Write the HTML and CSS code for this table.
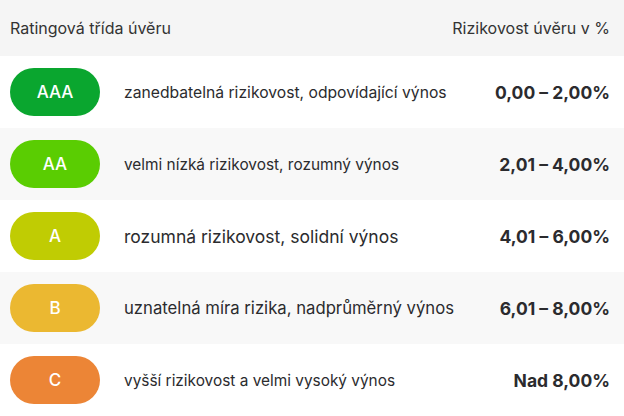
FILE: index.html
```html
<!DOCTYPE html>
<html>
<head>
    <title>Ratingové třídy</title>
    <link rel="stylesheet" href="styles.css">
</head>
<body>
    <div class="rating-table">
        <div class="rating-head">
            <span>Ratingová třída úvěru</span>
            <span>Rizikovost úvěru v %</span>
        </div>

        <div class="rating-row">
            <span class="badge badge-aaa">AAA</span>
            <span class="desc">zanedbatelná rizikovost, odpovídající výnos</span>
            <span class="range">0,00 – 2,00%</span>
        </div>
        <div class="rating-row alt">
            <span class="badge badge-aa">AA</span>
            <span class="desc desc-sm">velmi nízká rizikovost, rozumný výnos</span>
            <span class="range">2,01 – 4,00%</span>
        </div>
        <div class="rating-row">
            <span class="badge badge-a">A</span>
            <span class="desc desc-lg">rozumná rizikovost, solidní výnos</span>
            <span class="range">4,01 – 6,00%</span>
        </div>
        <div class="rating-row alt">
            <span class="badge badge-b">B</span>
            <span class="desc desc-md">uznatelná míra rizika, nadprůměrný výnos</span>
            <span class="range">6,01 – 8,00%</span>
        </div>
        <div class="rating-row">
            <span class="badge badge-c">C</span>
            <span class="desc desc-sm">vyšší rizikovost a velmi vysoký výnos</span>
            <span class="range">Nad 8,00%</span>
        </div>
    </div>
</body>
</html>
```

FILE: styles.css
```css
body {
    margin: 0;
    font-family: Inter, "Noto Sans", sans-serif;
    background-color: #fff;
    color: #2b2b2e;
}

.rating-table {
    width: 624px;
}

.rating-head {
    display: flex;
    justify-content: space-between;
    align-items: center;
    height: 56px;
    padding: 0 14px 0 10px;
    background-color: #f5f5f5;
    font-size: 16px;
    color: #333;
}

.rating-row {
    display: flex;
    align-items: center;
    height: 72px;
    padding: 0 14px 0 10px;
    background-color: #fff;
}

.rating-row.alt {
    background-color: #f8f8f8;
}

.badge {
    width: 90px;
    height: 48px;
    border-radius: 24px;
    display: flex;
    justify-content: center;
    align-items: center;
    color: #fff;
    font-size: 17px;
    font-weight: 500;
    margin-right: 24px;
}

.badge-aaa { background-color: #0aa62f; }
.badge-aa { background-color: #5acd02; }
.badge-a { background-color: #c0cc03; }
.badge-b { background-color: #ebb831; }
.badge-c { background-color: #ec8536; }

.desc {
    flex: 1;
    font-size: 15.7px;
}

.desc-sm { font-size: 15.4px; }
.desc-md { font-size: 16.7px; }
.desc-lg { font-size: 17.5px; }

.range {
    font-size: 17.5px;
    font-weight: 700;
}
```
